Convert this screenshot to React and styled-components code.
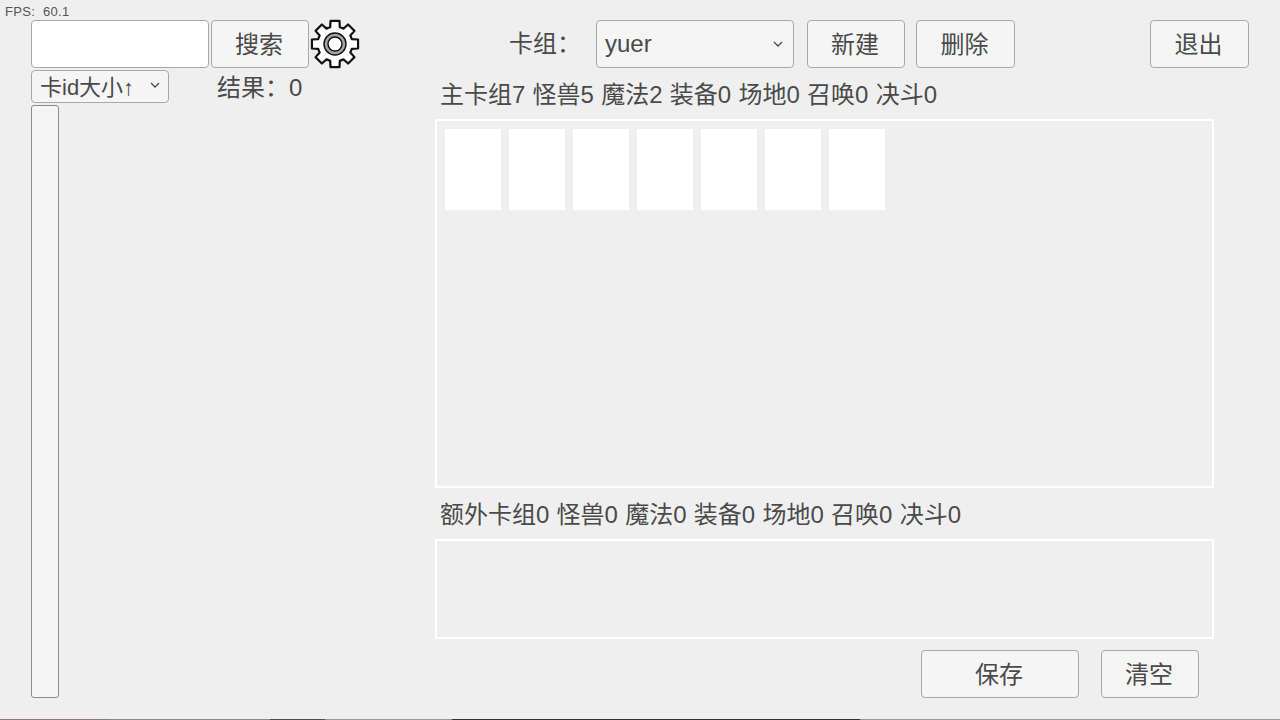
import React from "react";
import styled, { createGlobalStyle } from "styled-components";

const GlobalStyle = createGlobalStyle`
  html, body {
    margin: 0;
    padding: 0;
    background: #efefef;
  }
  * {
    box-sizing: border-box;
  }
`;

const fontStack = `"Liberation Sans", "Noto Sans CJK SC", sans-serif`;

const Screen = styled.div`
  position: relative;
  width: 1280px;
  height: 720px;
  overflow: hidden;
  background: #efefef;
  color: #4a4a4a;
  font-family: ${fontStack};
  display: flex;
  flex-direction: column;
`;

const Fps = styled.div`
  position: absolute;
  top: 4px;
  left: 5px;
  font: 13px/16px "Liberation Sans", sans-serif;
  letter-spacing: 0.3px;
  color: #555;
  white-space: pre;
`;

const Main = styled.div`
  flex: 1;
  display: flex;
  padding: 20px 0 0 31px;
`;

const LeftPane = styled.div`
  width: 404px;
  display: flex;
  flex-direction: column;
  gap: 2px;
`;

const Row = styled.div`
  display: flex;
  align-items: center;
`;

const SearchRow = styled(Row)`
  height: 48px;
`;

const SortRow = styled(Row)`
  height: 33px;
`;

const SearchInput = styled.div`
  width: 178px;
  height: 48px;
  background: #fff;
  border: 1px solid #a8a8a8;
  border-radius: 4px;
`;

const Button = styled.div`
  width: ${(p) => p.$w}px;
  height: 48px;
  margin-left: ${(p) => p.$ml || 0}px;
  padding: 2px 2px 0 0;
  display: flex;
  align-items: center;
  justify-content: center;
  background: #f5f5f5;
  border: 1px solid #a8a8a8;
  border-radius: 4px;
  font-size: 24px;
  line-height: 1;
`;

const Select = styled.div`
  width: ${(p) => p.$w}px;
  height: ${(p) => p.$h}px;
  margin-left: ${(p) => p.$ml || 0}px;
  display: flex;
  align-items: center;
  justify-content: space-between;
  padding: 0 ${(p) => p.$pr}px ${(p) => p.$pb || 0}px 8px;
  background: #f5f5f5;
  border: 1px solid #a8a8a8;
  border-radius: 4px;
  font-size: ${(p) => p.$fs}px;
  white-space: nowrap;
`;

const Caption = styled.div`
  font-size: 24px;
  line-height: 32px;
  margin-left: ${(p) => p.$ml || 0}px;
  padding-top: ${(p) => p.$pt || 0}px;
  white-space: nowrap;
`;

const Scrollbar = styled.div`
  width: 28px;
  height: 593px;
  background: #f5f5f5;
  border: 1px solid #8c8c8c;
  border-radius: 3px;
`;

const RightPane = styled.div`
  flex: 1;
  display: flex;
  flex-direction: column;
`;

const TopBar = styled(Row)`
  height: 48px;
`;

const BoxTitle = styled.div`
  height: ${(p) => p.$h}px;
  padding: 0 0 2px 5px;
  display: flex;
  align-items: center;
  font-size: 24px;
  word-spacing: 0.6px;
  white-space: nowrap;
`;

const CardBox = styled.div`
  width: 779px;
  height: ${(p) => p.$h}px;
  border: 2px solid #fff;
  padding: 8px;
  display: flex;
  gap: 8px;
`;

const Card = styled.div`
  width: 56px;
  height: 81px;
  background: #fff;
`;

const BottomBar = styled(Row)`
  margin-top: 11px;
  padding-left: 486px;
`;

const BottomEdge = styled.div`
  height: 1px;
  background: linear-gradient(
    90deg,
    #8a7a7a 0 110px,
    #8e8a8c 110px 270px,
    #55504f 270px 325px,
    #9a9690 325px 452px,
    #333031 452px 860px,
    #9a9690 860px 1280px
  );
`;

const GearIconWrap = styled.div`
  width: 50px;
  height: 50px;
  margin: -1px 0 -1px 1px;
  flex: none;
`;

const Chevron = ({ size = 10 }) => (
  <svg width={size} height={size * 0.6} viewBox="0 0 10 6" fill="none">
    <path d="M1 1l4 4 4-4" stroke="#4a4a4a" strokeWidth="1.3" />
  </svg>
);

// outline of the cog: 8 teeth around the centre of a 50x50 box
const gearPath = () => {
  const pt = (r, deg) => {
    const a = (deg * Math.PI) / 180;
    return `${(25 + r * Math.sin(a)).toFixed(2)} ${(25 - r * Math.cos(a)).toFixed(2)}`;
  };
  let d = "";
  for (let i = 0; i < 8; i++) {
    const c = i * 45;
    d += `${i === 0 ? "M" : "L"}${pt(17.5, c - 16)} L${pt(23.5, c - 11)} L${pt(23.5, c + 11)} L${pt(17.5, c + 16)} `;
    d += `A17.5 17.5 0 0 1 ${pt(17.5, c + 29)} `;
  }
  return d + "Z";
};

const Gear = () => (
  <GearIconWrap>
    <svg width="50" height="50" viewBox="0 0 50 50" fill="none">
      <path d={gearPath()} fill="#fff" stroke="#111" strokeWidth="2.2" strokeLinejoin="round" />
      <circle cx="25" cy="25" r="11" fill="#a4a4ae" stroke="#111" strokeWidth="1.4" />
      <circle cx="25" cy="25" r="7" fill="#fff" stroke="#111" strokeWidth="1.4" />
    </svg>
  </GearIconWrap>
);

export default function App() {
  return (
    <Screen>
      <GlobalStyle />
      <Fps>{"FPS:  60.1"}</Fps>
      <Main>
        <LeftPane>
          <SearchRow>
            <SearchInput />
            <Button $w={98} $ml={2}>搜索</Button>
            <Gear />
          </SearchRow>
          <SortRow>
            <Select $w={138} $h={33} $fs={22} $pr={8} $pb={3}>
              卡id大小↑
              <Chevron />
            </Select>
            <Caption $ml={48} $pt={2}>结果：0</Caption>
          </SortRow>
          <Scrollbar />
        </LeftPane>
        <RightPane>
          <TopBar>
            <Caption $ml={74}>卡组：</Caption>
            <Select $w={198} $h={48} $fs={24} $pr={10} $ml={15}>
              yuer
              <Chevron />
            </Select>
            <Button $w={98} $ml={13}>新建</Button>
            <Button $w={99} $ml={11}>删除</Button>
            <Button $w={99} $ml={135}>退出</Button>
          </TopBar>
          <BoxTitle $h={51}>主卡组7 怪兽5 魔法2 装备0 场地0 召唤0 决斗0</BoxTitle>
          <CardBox $h={369}>
            {Array.from({ length: 7 }, (_, i) => (
              <Card key={i} />
            ))}
          </CardBox>
          <BoxTitle $h={51}>额外卡组0 怪兽0 魔法0 装备0 场地0 召唤0 决斗0</BoxTitle>
          <CardBox $h={100} />
          <BottomBar>
            <Button $w={158}>保存</Button>
            <Button $w={98} $ml={22}>清空</Button>
          </BottomBar>
        </RightPane>
      </Main>
      <BottomEdge />
    </Screen>
  );
}
